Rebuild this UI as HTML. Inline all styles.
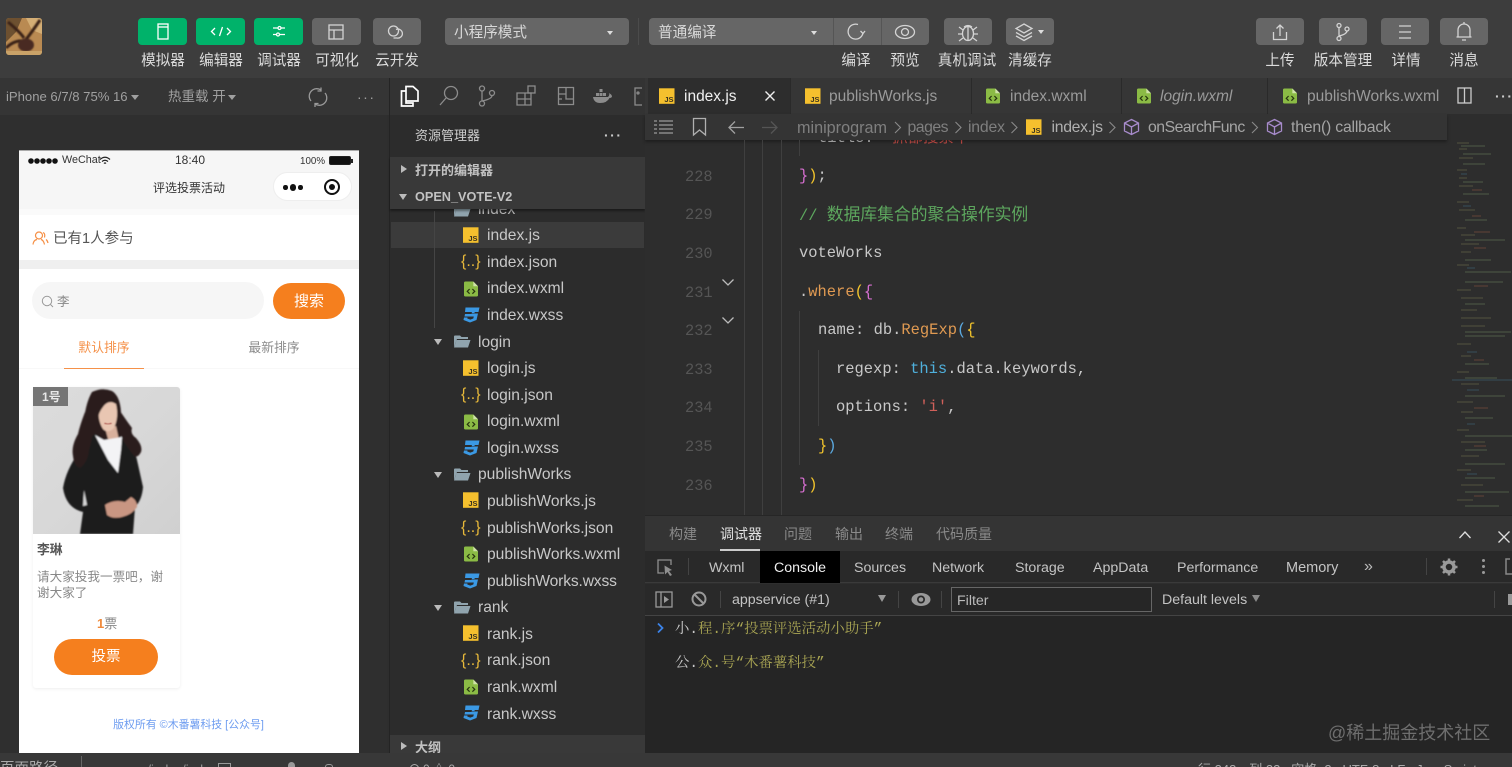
<!DOCTYPE html>
<html lang="zh"><head><meta charset="utf-8"><title>微信开发者工具</title>
<style>
*{box-sizing:border-box}
html,body{margin:0;padding:0;width:1512px;height:767px;overflow:hidden;background:#2e2e2e}
body{position:relative;font-family:"Liberation Sans","Noto Sans CJK SC",sans-serif;color:#ccc}
.a,.t,.b,svg.i{position:absolute}
.t{white-space:nowrap;line-height:1}
.c{transform:translateX(-50%)}
.b{border-radius:4px;background:#666}
.g{background:#00b26a}
.l{font-size:14.6px;top:53.5px;color:#dcdcdc}
.i{fill:none;stroke:#d4d4d4;stroke-width:1.3}
.tree{font-size:15.6px;color:#c8c8c8}
.br{font-size:15.8px;top:120px;color:#7f7f7f}
.js{font-size:16px;color:#e8b93a}
.m{font-family:"Liberation Mono","Noto Sans CJK SC",monospace;font-size:15.45px;color:#c8c8c8}
.n{font-family:"Liberation Mono",monospace;font-size:15.35px;color:#555;left:685px}
.tab{font-size:15.5px;color:#9a9a9a;top:89px}
.p{font-size:14px;color:#8a8a8a;top:527px}
.d{font-size:14.2px;color:#c4c4c4;top:561px}
.con{font-family:"Liberation Mono","Noto Serif CJK SC",serif;font-size:14.4px;color:#a9a553}
.con b{font-weight:400;color:#c9c9c9}
</style></head><body>
<svg width="0" height="0" style="position:absolute"><defs>
<symbol id="js" viewBox="0 0 16 16"><rect width="15.500" height="15.500" y=".3" fill="#f5c02e"/><text x="14.500" y="14" text-anchor="end" font-family="Liberation Sans" font-size="7.500" font-weight="700" fill="#3a3320">JS</text></symbol>
<symbol id="xm" viewBox="0 0 15 16"><path d="M1.500 0H10L15 5V14.500Q15 16 13.500 16H1.500Q0 16 0 14.500V1.500Q0 0 1.500 0Z" fill="#8bbb45"/><path d="M10 0V5H15Z" fill="#cfe3a8"/><path d="M6 8L3.500 10.500L6 13M9 8L11.500 10.500L9 13" fill="none" stroke="#26330f" stroke-width="1.300"/></symbol>
<symbol id="cs" viewBox="0 0 17 16"><path d="M2.500 0.500H16.500L15.500 5H9L8.500 6.500H15L13.500 13L7 15.500L0.500 13L1 10.500H4.500L4.300 11.500L7.300 12.600L10.300 11.500L10.800 9.500H1.500L2 7H11.300L11.700 5H2Z" fill="#3b99e4"/></symbol>
<symbol id="fo" viewBox="0 0 18 13"><path d="M1 1.500Q1 .5 2 .5H7L8.500 2H15V4H4L1 12Z" fill="#90a4ae"/><path d="M3.500 5H17.500L15 12.500H1Z" fill="#90a4ae"/></symbol>
<filter id="soft"><feGaussianBlur stdDeviation="0.7"/></filter>
<filter id="soft2"><feGaussianBlur stdDeviation="0.4"/></filter>
</defs></svg>

<!-- top toolbar -->
<div class="a" style="left:0;top:0;width:1512px;height:78px;background:#3d3d3d"></div>
<svg class="a" style="left:6px;top:18px;border-radius:3px" width="36" height="37" viewBox="0 0 36 37"><rect width="36" height="37" fill="#b98a52"/><path d="M0 0H16L10 14L0 24Z" fill="#6d5030"/><path d="M20 0H36V16L26 12Z" fill="#d4ae75"/><g filter="url(#soft)"><path d="M2 4Q14 14 18 20M34 2Q26 14 18 24M0 30Q10 20 22 24" stroke="#3b2414" stroke-width="3" fill="none"/><ellipse cx="20" cy="27" rx="8" ry="6.500" fill="#4a2c20"/></g><rect y="33" width="36" height="4" fill="#c9a268"/></svg>

<div class="b g" style="left:138px;top:18px;width:49px;height:27px"></div>
<svg class="i" style="left:156px;top:23px" width="14" height="17"><rect x="2" y="1" width="10" height="15" stroke="#fff"/><path d="M2 4H12" stroke="#fff"/></svg>
<div class="b g" style="left:196px;top:18px;width:49px;height:27px"></div>
<svg class="i" style="left:210px;top:25px" width="22" height="13"><path d="M5 3L1.500 6.500L5 10M17 3L20.500 6.500L17 10M12.500 2L9.500 11" stroke="#fff"/></svg>
<div class="b g" style="left:254px;top:18px;width:49px;height:27px"></div>
<svg class="i" style="left:272px;top:25px" width="14" height="13"><path d="M1 3H6M9 3H13M1 9.500H4M8 9.500H13" stroke="#fff"/><circle cx="7.500" cy="3" r="1.500" stroke="#fff"/><circle cx="6" cy="9.500" r="1.500" stroke="#fff"/></svg>
<div class="b" style="left:312px;top:18px;width:49px;height:27px"></div>
<svg class="i" style="left:328px;top:24px" width="16" height="16"><rect x="1" y="1" width="14" height="14"/><path d="M1 6H15M6 6V15"/></svg>
<div class="b" style="left:373px;top:18px;width:48px;height:27px"></div>
<svg class="i" style="left:387px;top:24px" width="20" height="16"><circle cx="6.500" cy="7" r="5"/><path d="M9 5.500A4.500 4.500 0 1 1 10 14H6.500"/></svg>
<div class="b" style="left:445px;top:18px;width:184px;height:27px"></div>
<div class="t" style="left:454px;top:26px;font-size:14.6px;color:#d8d8d8">小程序模式</div>
<div class="a" style="left:607px;top:31px;border:3px solid transparent;border-top:4px solid #ddd"></div>
<div class="a" style="left:638px;top:18px;width:1px;height:27px;background:#4b4b4b"></div>
<div class="b" style="left:649px;top:18px;width:280px;height:27px"></div>
<div class="a" style="left:833px;top:18px;width:1px;height:27px;background:#555"></div>
<div class="a" style="left:881px;top:18px;width:1px;height:27px;background:#555"></div>
<div class="t" style="left:658px;top:26px;font-size:14.6px;color:#d8d8d8">普通编译</div>
<div class="a" style="left:811px;top:31px;border:3px solid transparent;border-top:4px solid #ddd"></div>
<svg class="i" style="left:846px;top:22px" width="20" height="20"><path d="M12 2.500A7.500 7.500 0 1 0 17 11"/><path d="M14.500 9L17 11.500L19 9"/></svg>
<svg class="i" style="left:894px;top:24px" width="22" height="16"><ellipse cx="11" cy="8" rx="9.500" ry="6.500"/><circle cx="11" cy="8" r="3.500"/></svg>
<div class="b" style="left:944px;top:18px;width:48px;height:27px"></div>
<svg class="i" style="left:957px;top:21px" width="22" height="22"><ellipse cx="11" cy="12.500" rx="5.500" ry="7"/><path d="M7 6Q11 3 15 6M11 6V19M6 9L2 6M16 9L20 6M5 13H1M17 13H21M6 17L2 20M16 17L20 20"/></svg>
<div class="b" style="left:1006px;top:18px;width:48px;height:27px"></div>
<svg class="i" style="left:1014px;top:22px" width="20" height="20"><path d="M10 2L18 6.500L10 11L2 6.500ZM2 10.500L10 15L18 10.500M2 14L10 18.500L18 14"/></svg>
<div class="a" style="left:1038px;top:30px;border:3px solid transparent;border-top:4px solid #ddd"></div>
<div class="b" style="left:1256px;top:18px;width:48px;height:27px"></div>
<svg class="i" style="left:1271px;top:22px" width="18" height="20"><path d="M9 14V3M5.500 6.500L9 3L12.500 6.500M2.500 10V17.500H15.500V10"/></svg>
<div class="b" style="left:1319px;top:18px;width:48px;height:27px"></div>
<svg class="i" style="left:1335px;top:22px" width="16" height="20"><circle cx="4" cy="3.500" r="2"/><circle cx="4" cy="16.500" r="2"/><circle cx="12" cy="7" r="2"/><path d="M4 5.500V14.500M12 9Q12 12 4 14"/></svg>
<div class="b" style="left:1381px;top:18px;width:48px;height:27px"></div>
<svg class="i" style="left:1397px;top:24px" width="16" height="16"><path d="M2 2H14M2 8H14M2 14H14"/></svg>
<div class="b" style="left:1440px;top:18px;width:48px;height:27px"></div>
<svg class="i" style="left:1455px;top:21px" width="18" height="22"><path d="M3 16V9A6 6 0 0 1 15 9V16ZM1.500 16H16.500M7 19H11M9 1V3"/></svg>

<div class="t l c" style="left:163px">模拟器</div><div class="t l c" style="left:221px">编辑器</div><div class="t l c" style="left:279px">调试器</div><div class="t l c" style="left:337px">可视化</div><div class="t l c" style="left:397px">云开发</div>
<div class="t l c" style="left:856px">编译</div><div class="t l c" style="left:905px">预览</div><div class="t l c" style="left:967px">真机调试</div><div class="t l c" style="left:1030px">清缓存</div>
<div class="t l c" style="left:1280px">上传</div><div class="t l c" style="left:1343px">版本管理</div><div class="t l c" style="left:1406px">详情</div><div class="t l c" style="left:1464px">消息</div>

<!-- simulator -->
<div class="a" style="left:0;top:78px;width:390px;height:37px;background:#353535"></div>
<div class="a" style="left:0;top:115px;width:387px;height:638px;background:#2f2f2f"></div>
<div class="t" style="left:6px;top:90px;font-size:13.100px;color:#a0a0a0">iPhone 6/7/8 75% 16</div>
<div class="a" style="left:131px;top:95px;border:4px solid transparent;border-top:5px solid #a0a0a0"></div>
<div class="t" style="left:168px;top:90px;font-size:13.500px;color:#a0a0a0">热重载 开</div>
<div class="a" style="left:228px;top:95px;border:4px solid transparent;border-top:5px solid #a0a0a0"></div>
<svg class="i" style="left:308px;top:87px;stroke:#9a9a9a" width="20" height="20"><path d="M3 14A7.500 7.500 0 0 1 13 3M17 6A7.500 7.500 0 0 1 7 17M13 0.500V4H9.500M7 20V16.500H10.500"/></svg>
<div class="t" style="left:357px;top:90px;font-size:14px;color:#a0a0a0;letter-spacing:1.500px">···</div>

<!-- phone -->
<div class="a" style="left:19px;top:150px;width:340px;height:603px;background:#fff;overflow:hidden;border-top:1px solid #aaa"></div>
<div class="a" style="left:19px;top:151px;width:340px;height:58px;background:#f6f6f6"></div>
<svg class="a" style="left:27px;top:157px" width="33" height="8" fill="#111"><circle cx="4" cy="4" r="2.800"/><circle cx="10" cy="4" r="2.800"/><circle cx="16" cy="4" r="2.800"/><circle cx="22" cy="4" r="2.800"/><circle cx="28" cy="4" r="2.800"/></svg>
<div class="t" style="left:62px;top:155px;font-size:10.800px;color:#333">WeChat</div>
<svg class="a" style="left:99px;top:156px" width="12" height="10"><path d="M1 3.500Q6 -1 11 3.500M3 5.500Q6 3 9 5.500M5 7.500Q6 6.500 7 7.500" fill="none" stroke="#222" stroke-width="1.200"/></svg>
<div class="t" style="left:175px;top:154px;font-size:12px;color:#333">18:40</div>
<div class="t" style="left:300px;top:157px;font-size:9.800px;color:#333">100%</div>
<div class="a" style="left:329px;top:156px;width:22px;height:9px;border:1px solid #222;border-radius:2px;background:#111"></div>
<div class="a" style="left:351px;top:158.500px;width:1.500px;height:4px;background:#222"></div>
<div class="t" style="left:153px;top:182px;font-size:12px;color:#333">评选投票活动</div>
<div class="a" style="left:273px;top:172px;width:79px;height:29px;border:1px solid #eee;border-radius:15px;background:#fff"></div>
<div class="a" style="left:283px;top:185px;width:4.500px;height:4.500px;border-radius:50%;background:#111"></div>
<div class="a" style="left:289.500px;top:184px;width:6.500px;height:6.500px;border-radius:50%;background:#111"></div>
<div class="a" style="left:298px;top:185px;width:4.500px;height:4.500px;border-radius:50%;background:#111"></div>
<div class="a" style="left:324px;top:179px;width:16px;height:16px;border:2px solid #111;border-radius:50%"></div>
<div class="a" style="left:329px;top:184px;width:6px;height:6px;border-radius:50%;background:#111"></div>
<div class="a" style="left:19px;top:209px;width:340px;height:6px;background:#fafafa"></div>
<svg class="a" style="left:32px;top:231px" width="17" height="15" fill="none" stroke="#f58f45" stroke-width="1.200"><circle cx="7" cy="4.500" r="3.500"/><path d="M1 13.500Q1.500 9 5 8.500M9 8.500Q11.500 9 12.500 13.500M11 1.500Q13.500 2.500 12.500 6.500M14 8.500Q15.500 9.500 16 12"/></svg>
<div class="t" style="left:53px;top:232px;font-size:14.500px;color:#555">已有1人参与</div>
<div class="a" style="left:19px;top:260px;width:340px;height:9px;background:#efefef"></div>
<div class="a" style="left:32px;top:282px;width:232px;height:37px;border-radius:19px;background:#f6f6f6"></div>
<svg class="a" style="left:41px;top:295px" width="13" height="13" fill="none" stroke="#999" stroke-width="1"><circle cx="6" cy="6" r="4.700"/><path d="M9.500 9.500L12 12"/></svg>
<div class="t" style="left:57px;top:295.500px;font-size:12.500px;color:#888">李</div>
<div class="a" style="left:273px;top:283px;width:72px;height:36px;border-radius:18px;background:#f57f1e"></div>
<div class="t c" style="left:309px;top:294px;font-size:15px;color:#fff">搜索</div>
<div class="t c" style="left:104px;top:342px;font-size:12.800px;color:#f59149">默认排序</div>
<div class="t c" style="left:274px;top:342px;font-size:12.800px;color:#8c8c8c">最新排序</div>
<div class="a" style="left:19px;top:368px;width:340px;height:1px;background:#f8f8f8"></div>
<div class="a" style="left:64px;top:367.500px;width:80px;height:1.500px;background:#f59149"></div>

<!-- card -->
<div class="a" style="left:33px;top:387px;width:147px;height:301px;border-radius:3px;box-shadow:0 1px 3px rgba(0,0,0,.07);background:#fff"></div>
<svg class="a" style="left:33px;top:387px;border-radius:3px 3px 0 0" width="147" height="147" viewBox="33 387 147 147">
<defs><linearGradient id="bg" x1="0" y1="0" x2="1" y2="1"><stop offset="0" stop-color="#dcdcdc"/><stop offset=".5" stop-color="#d8d8d8"/><stop offset="1" stop-color="#d0d0d0"/></linearGradient></defs>
<rect x="33" y="387" width="147" height="147" fill="url(#bg)"/>
<g filter="url(#soft)">
<path d="M92 392Q102 387 112 391Q120 396 121 412L121 440L84 450L84 420Q86 402 92 392Z" fill="#2b1e1f"/>
<path d="M105 428L116 426L119 440L110 446Z" fill="#d8b09c"/>
<path d="M79 452Q86 439 96 434L108 444L122 438Q134 446 137 460L143 487Q142 500 135 507L133 534H80L83 512Q66 508 63 488Q66 470 79 452Z" fill="#1b1a1c"/>
<path d="M84 490L83 506L87 505Z" fill="#d8d8d8"/>
<path d="M95 435L104 440L122 437L121 450L118 473L108 460Z" fill="#f3f3f5"/>
<path d="M85 412Q80 425 78 434Q71 446 73 456Q74 466 80 468Q88 462 89 450Q93 438 93 425Z" fill="#2b1e1f"/>
<path d="M118 408Q126 420 132 428Q130 434 136 438Q143 446 141 452Q138 458 134 456Q128 448 124 442Q118 430 116 420Z" fill="#2b1e1f"/>
<path d="M99 404Q106 398 116 404Q119 417 114 428Q108 434 103 429Q97 420 99 404Z" fill="#e9c6b2"/>
<path d="M97 403Q106 393 118 404Q108 399 103 407Q99 412 98 418Z" fill="#2b1e1f"/>
<path d="M105 505Q114 499 125 502L131 497Q137 500 137 507Q132 514 125 516Q114 520 107 515Z" fill="#c99682"/>
</g>
<path d="M102.500 412.500H106M110 412.500H113.500" stroke="#33211f" stroke-width="1.100" filter="url(#soft2)"/>
<path d="M104.500 423Q108 425.500 111.500 423" stroke="#b5655c" stroke-width="1.400" fill="none" filter="url(#soft2)"/>
</svg>
<div class="a" style="left:33px;top:387px;width:35px;height:19px;background:#757575"></div>
<div class="t" style="left:42px;top:390.500px;font-size:12px;font-weight:700;color:#e8e8e8">1号</div>
<div class="t" style="left:37px;top:544px;font-size:12.800px;font-weight:700;color:#555">李琳</div>
<div class="t" style="left:37px;top:571px;font-size:12.600px;color:#888">请大家投我一票吧，谢</div>
<div class="t" style="left:37px;top:587px;font-size:12.600px;color:#888">谢大家了</div>
<div class="t" style="left:97px;top:616.500px;font-size:13px;color:#888"><span style="color:#f08a3c;font-weight:700">1</span>票</div>
<div class="a" style="left:54px;top:639px;width:104px;height:36px;border-radius:18px;background:#f57f1e"></div>
<div class="t c" style="left:106px;top:650px;font-size:14.500px;color:#fff">投票</div>
<div class="t c" style="left:188.500px;top:720px;font-size:10.900px;color:#6d9cf0">版权所有 ©木番薯科技 [公众号]</div>

<!-- sidebar / activity -->
<div class="a" style="left:389px;top:78px;width:1px;height:675px;background:#242424"></div>
<div class="a" style="left:390px;top:78px;width:256px;height:37px;background:#333"></div>
<div class="a" style="left:390px;top:115px;width:255px;height:620px;background:#2c2c2c"></div>
<svg class="i" style="left:400px;top:85px;stroke:#fff;stroke-width:1.700" width="20" height="22"><path d="M1.500 6H6V18H13V21H1.500ZM6 1.500H13L18 6V16H6Z"/></svg>
<svg class="i" style="left:439px;top:85px;stroke:#8c8c8c" width="20" height="22"><circle cx="12" cy="8" r="6.500"/><path d="M7 13L1 20"/></svg>
<svg class="i" style="left:478px;top:85px;stroke:#8c8c8c" width="18" height="22"><circle cx="4" cy="3.500" r="2.500"/><circle cx="4" cy="18.500" r="2.500"/><circle cx="14" cy="8" r="2.500"/><path d="M4 6V16M14 10.500Q14 14 4 16"/></svg>
<svg class="i" style="left:516px;top:85px;stroke:#8c8c8c" width="20" height="22"><path d="M1 8H9V20H1ZM1 14H15V20H9M9 8H15V14"/><rect x="12" y="1" width="7" height="7"/></svg>
<svg class="i" style="left:557px;top:86px;stroke:#8c8c8c" width="18" height="20"><path d="M1.500 1.500H16.500V18.500H1.500ZM1.500 8H9V1.500M9 8V13H16.500M1.500 13H5"/></svg>
<svg class="a" style="left:593px;top:89px" width="20" height="15" fill="#8c8c8c"><rect x="3" y="4" width="3" height="3"/><rect x="6.500" y="4" width="3" height="3"/><rect x="10" y="4" width="3" height="3"/><rect x="6.500" y="0" width="3" height="3"/><path d="M0 8H15Q17 6 16 4Q18 5 19 7Q19 9 16.500 9Q14 14 7 14Q1 14 0 8Z"/></svg>
<svg class="i" style="left:634px;top:87px;stroke:#8c8c8c" width="8" height="19"><rect x="1" y="1" width="8" height="17"/><circle cx="4" cy="6" r="1"/></svg>
<div class="t" style="left:415px;top:129px;font-size:13px;color:#cfcfcf">资源管理器</div>
<div class="t" style="left:604px;top:128px;font-size:14px;color:#ccc;letter-spacing:1.500px;font-weight:700">···</div>

<!-- tree -->
<div class="a" style="left:391px;top:222px;width:253px;height:26px;background:#3b3b3b"></div>
<div class="t tree" style="left:478px;top:202px;color:#b5b5b5">index</div>
<svg class="a" style="left:453px;top:204px" width="18" height="13"><use href="#fo"/></svg>
<div class="a" style="left:434px;top:211px;width:1px;height:117px;background:#454545"></div>
<div class="a" style="left:390px;top:157px;width:255px;height:52px;background:#393939;box-shadow:0 2px 2px rgba(0,0,0,.4)"></div>
<div class="a" style="left:401px;top:165px;border:4.500px solid transparent;border-left:6px solid #bbb"></div>
<div class="t" style="left:415px;top:164px;font-size:13px;font-weight:700;color:#c2c2c2">打开的编辑器</div>
<div class="a" style="left:399px;top:194px;border:4.500px solid transparent;border-top:6px solid #bbb"></div>
<div class="t" style="left:415px;top:190.500px;font-size:12.700px;font-weight:700;color:#c2c2c2">OPEN_VOTE-V2</div>

<svg class="a" style="left:463px;top:227px" width="16" height="16"><use href="#js"/></svg><div class="t tree" style="left:487px;top:228px">index.js</div>
<div class="t js" style="left:461px;top:254px">{..}</div><div class="t tree" style="left:487px;top:255px">index.json</div>
<svg class="a" style="left:464px;top:281px" width="14" height="16"><use href="#xm"/></svg><div class="t tree" style="left:487px;top:281px">index.wxml</div>
<svg class="a" style="left:463px;top:307px" width="17" height="16"><use href="#cs"/></svg><div class="t tree" style="left:487px;top:308px">index.wxss</div>

<div class="a" style="left:434px;top:339px;border:4.500px solid transparent;border-top:6px solid #bbb"></div>
<svg class="a" style="left:453px;top:335px" width="18" height="13"><use href="#fo"/></svg><div class="t tree" style="left:478px;top:335px">login</div>
<svg class="a" style="left:463px;top:360px" width="16" height="16"><use href="#js"/></svg><div class="t tree" style="left:487px;top:361px">login.js</div>
<div class="t js" style="left:461px;top:387px">{..}</div><div class="t tree" style="left:487px;top:388px">login.json</div>
<svg class="a" style="left:464px;top:414px" width="14" height="16"><use href="#xm"/></svg><div class="t tree" style="left:487px;top:414px">login.wxml</div>
<svg class="a" style="left:463px;top:440px" width="17" height="16"><use href="#cs"/></svg><div class="t tree" style="left:487px;top:441px">login.wxss</div>

<div class="a" style="left:434px;top:472px;border:4.500px solid transparent;border-top:6px solid #bbb"></div>
<svg class="a" style="left:453px;top:468px" width="18" height="13"><use href="#fo"/></svg><div class="t tree" style="left:478px;top:467px">publishWorks</div>
<svg class="a" style="left:463px;top:492px" width="16" height="16"><use href="#js"/></svg><div class="t tree" style="left:487px;top:494px">publishWorks.js</div>
<div class="t js" style="left:461px;top:520px">{..}</div><div class="t tree" style="left:487px;top:521px">publishWorks.json</div>
<svg class="a" style="left:464px;top:546px" width="14" height="16"><use href="#xm"/></svg><div class="t tree" style="left:487px;top:547px">publishWorks.wxml</div>
<svg class="a" style="left:463px;top:573px" width="17" height="16"><use href="#cs"/></svg><div class="t tree" style="left:487px;top:574px;letter-spacing:-.15px">publishWorks.wxss</div>

<div class="a" style="left:434px;top:605px;border:4.500px solid transparent;border-top:6px solid #bbb"></div>
<svg class="a" style="left:453px;top:601px" width="18" height="13"><use href="#fo"/></svg><div class="t tree" style="left:478px;top:600px">rank</div>
<svg class="a" style="left:463px;top:625px" width="16" height="16"><use href="#js"/></svg><div class="t tree" style="left:487px;top:627px">rank.js</div>
<div class="t js" style="left:461px;top:653px">{..}</div><div class="t tree" style="left:487px;top:653px">rank.json</div>
<svg class="a" style="left:464px;top:679px" width="14" height="16"><use href="#xm"/></svg><div class="t tree" style="left:487px;top:680px">rank.wxml</div>
<svg class="a" style="left:463px;top:705px" width="17" height="16"><use href="#cs"/></svg><div class="t tree" style="left:487px;top:707px">rank.wxss</div>

<div class="a" style="left:390px;top:735px;width:255px;height:24px;background:#393939"></div>
<div class="a" style="left:401px;top:742px;border:4.500px solid transparent;border-left:6px solid #bbb"></div>
<div class="t" style="left:415px;top:741px;font-size:13px;font-weight:700;color:#c2c2c2">大纲</div>

<!-- editor background and code under breadcrumb -->
<div class="a" style="left:645px;top:114px;width:867px;height:401px;background:#2d2d2d"></div>
<div class="t m" style="left:818px;top:131px">title: <span style="color:#d0504a">"抓都搜索中"</span></div>

<!-- tabs -->
<div class="a" style="left:645px;top:78px;width:867px;height:36px;background:#363636"></div>
<div class="a" style="left:648px;top:78px;width:142px;height:36px;background:#2d2d2d"></div>
<div class="a" style="left:790px;top:78px;width:1px;height:36px;background:#2a2a2a"></div>
<div class="a" style="left:971px;top:78px;width:1px;height:36px;background:#2a2a2a"></div>
<div class="a" style="left:1121px;top:78px;width:1px;height:36px;background:#2a2a2a"></div>
<div class="a" style="left:1267px;top:78px;width:1px;height:36px;background:#2a2a2a"></div>
<svg class="a" style="left:659px;top:88px" width="16" height="16"><use href="#js"/></svg>
<div class="t tab" style="left:684px;color:#f0f0f0">index.js</div>
<svg class="a" style="left:764px;top:90px" width="12" height="12"><path d="M1.500 1.500L10.500 10.500M10.500 1.500L1.500 10.500" stroke="#eee" stroke-width="1.400"/></svg>
<svg class="a" style="left:805px;top:88px" width="16" height="16"><use href="#js"/></svg>
<div class="t tab" style="left:829px">publishWorks.js</div>
<svg class="a" style="left:986px;top:88px" width="14" height="16"><use href="#xm"/></svg>
<div class="t tab" style="left:1010px">index.wxml</div>
<svg class="a" style="left:1137px;top:88px" width="14" height="16"><use href="#xm"/></svg>
<div class="t tab" style="left:1160px;font-style:italic">login.wxml</div>
<svg class="a" style="left:1283px;top:88px" width="14" height="16"><use href="#xm"/></svg>
<div class="t tab" style="left:1307px">publishWorks.wxml</div>
<svg class="i" style="left:1457px;top:87px;stroke:#ccc" width="16" height="17"><rect x="1" y="1" width="13" height="15"/><path d="M7.500 1V16"/></svg>
<div class="t" style="left:1495px;top:89px;font-size:14px;color:#ccc;letter-spacing:1.500px;font-weight:700">···</div>

<!-- breadcrumb -->
<div class="a" style="left:645px;top:114px;width:802px;height:26px;background:#343434;box-shadow:0 2px 3px rgba(0,0,0,.35)"></div>
<svg class="i" style="left:654px;top:119px;stroke:#9a9a9a" width="20" height="16"><path d="M0 2H3M5 2H19M0 6H3M5 6H19M0 10H3M5 10H19M0 14H3M5 14H19"/></svg>
<svg class="i" style="left:692px;top:117px;stroke:#b0b0b0" width="15" height="20"><path d="M1.500 1.500H13.500V18L7.500 13L1.500 18Z"/></svg>
<svg class="i" style="left:727px;top:120px;stroke:#a0a0a0" width="18" height="15"><path d="M17 7.500H2M8 1.500L2 7.500L8 13.500"/></svg>
<svg class="i" style="left:761px;top:120px;stroke:#555" width="18" height="15"><path d="M1 7.500H16M10 1.500L16 7.500L10 13.500"/></svg>
<div class="t br" style="left:797px;font-size:16.200px">miniprogram</div>
<div class="t br" style="left:907.500px;letter-spacing:-.5px">pages</div>
<div class="t br" style="left:968px;letter-spacing:-.2px">index</div>
<svg class="a" style="left:890px;top:118px" width="230" height="18" fill="none" stroke="#8a8a8a" stroke-width="1.100"><path d="M5 4L10.500 9.500L5 15M65.500 4L71 9.500L65.500 15M121.500 4L127 9.500L121.500 15M219.500 4L225 9.500L219.500 15"/></svg>
<svg class="a" style="left:1026px;top:119px" width="16" height="16"><use href="#js"/></svg>
<div class="t br" style="left:1051.500px;color:#b0b0b0;letter-spacing:-.3px">index.js</div>
<svg class="i" style="left:1123px;top:118px;stroke:#a78bcb" width="17" height="18"><path d="M8.500 1.500L15.500 5V13L8.500 16.500L1.500 13V5ZM1.500 5L8.500 9L15.500 5M8.500 9V16.500"/></svg>
<div class="t br" style="left:1148px;color:#a5a5a5;letter-spacing:-.5px">onSearchFunc</div>
<svg class="a" style="left:1250px;top:118px" width="12" height="18" fill="none" stroke="#8a8a8a" stroke-width="1.100"><path d="M2 4L7.500 9.500L2 15"/></svg>
<svg class="i" style="left:1266px;top:118px;stroke:#a78bcb" width="17" height="18"><path d="M8.500 1.500L15.500 5V13L8.500 16.500L1.500 13V5ZM1.500 5L8.500 9L15.500 5M8.500 9V16.500"/></svg>
<div class="t br" style="left:1291px;color:#a5a5a5;letter-spacing:-.2px">then() callback</div>

<!-- guides -->
<div class="a" style="left:744px;top:140px;width:1px;height:375px;background:#3f3f3f"></div>
<div class="a" style="left:762px;top:140px;width:1px;height:375px;background:#3f3f3f"></div>
<div class="a" style="left:781px;top:140px;width:1px;height:375px;background:#3f3f3f"></div>
<div class="a" style="left:799px;top:140px;width:1px;height:16px;background:#3f3f3f"></div>
<div class="a" style="left:799px;top:311px;width:1px;height:154px;background:#3f3f3f"></div>
<div class="a" style="left:818px;top:350px;width:1px;height:76px;background:#3f3f3f"></div>
<div class="t n" style="top:170px">228</div><div class="t n" style="top:208px">229</div><div class="t n" style="top:247px">230</div><div class="t n" style="top:286px">231</div><div class="t n" style="top:324px">232</div><div class="t n" style="top:363px">233</div><div class="t n" style="top:401px">234</div><div class="t n" style="top:440px">235</div><div class="t n" style="top:479px">236</div>
<svg class="i" style="left:721px;top:278px;stroke:#bbb" width="14" height="9"><path d="M1.500 1.500L7 7L12.500 1.500"/></svg>
<svg class="i" style="left:721px;top:316px;stroke:#bbb" width="14" height="9"><path d="M1.500 1.500L7 7L12.500 1.500"/></svg>
<div class="t m" style="left:799px;top:169px"><span style="color:#d66fd0">}</span><span style="color:#f2c42c">)</span>;</div>
<div class="t m" style="left:799px;top:209px;color:#5da75e">// <span style="font-size:16.800px">数据库集合的聚合操作实例</span></div>
<div class="t m" style="left:799px;top:246px">voteWorks</div>
<div class="t m" style="left:799px;top:285px">.<span style="color:#e09a52">where</span><span style="color:#f2c42c">(</span><span style="color:#d66fd0">{</span></div>
<div class="t m" style="left:818px;top:323px">name: db.<span style="color:#e09a52">RegExp</span><span style="color:#5ba9e0">(</span><span style="color:#f2c42c">{</span></div>
<div class="t m" style="left:836px;top:362px">regexp: <span style="color:#4fb0dc">this</span>.data.keywords,</div>
<div class="t m" style="left:836px;top:400px">options: <span style="color:#d0605a">'i'</span>,</div>
<div class="t m" style="left:818px;top:439px"><span style="color:#f2c42c">}</span><span style="color:#5ba9e0">)</span></div>
<div class="t m" style="left:799px;top:478px"><span style="color:#d66fd0">}</span><span style="color:#f2c42c">)</span></div>

<!-- minimap -->
<svg class="a" style="left:1448px;top:140px" width="64" height="375" fill="none" stroke-width=".8" opacity=".55">
<path stroke="#8a8a5a" d="M9 3h12M11 9h8M11 18h14M9 30h10M11 38h8M11 46h14M9 62h12M11 70h16M9 88h9M13 95h14M13 104h18M13 112h10M9 125h12M9 150h14M13 158h22M13 170h16M13 178h30M13 186h24M9 204h14M13 216h10M9 232h12M13 244h18M9 262h16M13 272h12M9 290h12M13 302h24M13 316h18M9 330h14M13 345h22M9 360h16"/>
<path stroke="#7f9a6b" d="M13 6h24M15 14h28M15 24h22M15 42h20M15 54h26M17 80h22M17 100h40M17 120h26M17 132h46M17 142h38M17 164h20M17 192h46M17 196h40M17 224h24M17 238h32M17 256h40M17 278h28M17 296h48M17 310h22M17 324h40M17 338h30M17 352h44M17 366h34"/>
<path stroke="#b0674a" d="M24 50h10M24 76h9M26 92h16M26 108h12M26 146h14M26 220h10M26 268h14M26 306h12M26 356h10"/>
<path stroke="#4a7f9e" d="M4 240h60M13 34h6M15 66h8M19 128h8M19 212h10M19 250h12M19 284h8M19 334h10"/>
</svg>

<!-- panel -->
<div class="a" style="left:645px;top:515px;width:867px;height:36px;background:#343434;border-top:1px solid #262626"></div>
<div class="t p" style="left:669px">构建</div>
<div class="t p" style="left:720px;color:#e2e2e2">调试器</div>
<div class="a" style="left:720px;top:549px;width:40px;height:1.500px;background:#ccc"></div>
<div class="t p" style="left:784px">问题</div><div class="t p" style="left:835px">输出</div><div class="t p" style="left:885px">终端</div><div class="t p" style="left:936px">代码质量</div>
<svg class="i" style="left:1458px;top:530px;stroke:#ddd" width="14" height="10"><path d="M1.500 8L7 2L12.500 8"/></svg>
<svg class="i" style="left:1497px;top:530px;stroke:#ddd" width="14" height="14"><path d="M1.500 1.500L12.500 12.500M12.500 1.500L1.500 12.500"/></svg>
<div class="a" style="left:645px;top:551px;width:867px;height:32px;background:#292929;border-bottom:1px solid #3a3a3a"></div>
<div class="a" style="left:760px;top:551px;width:80px;height:32px;background:#000"></div>
<svg class="i" style="left:656px;top:558px;stroke:#8f8f8f" width="20" height="19"><path d="M8 15H2V2H15V7"/><path d="M8.500 7.500L16 12L13 13L16 17L14 18L11.500 14L9 16.500Z" fill="#8f8f8f" stroke="none"/></svg>
<div class="a" style="left:688px;top:558px;width:1px;height:17px;background:#444"></div>
<div class="t d" style="left:709px">Wxml</div>
<div class="t d" style="left:774px;color:#f0f0f0">Console</div>
<div class="t d" style="left:854px">Sources</div><div class="t d" style="left:932px">Network</div><div class="t d" style="left:1015px">Storage</div><div class="t d" style="left:1093px">AppData</div><div class="t d" style="left:1177px">Performance</div><div class="t d" style="left:1286px;font-size:14.500px">Memory</div>
<div class="t" style="left:1364px;top:559px;font-size:16px;color:#bbb">»</div>
<div class="a" style="left:1426px;top:558px;width:1px;height:17px;background:#444"></div>
<svg class="a" style="left:1440px;top:558px" width="18" height="18"><circle cx="9" cy="9" r="5" fill="none" stroke="#9a9a9a" stroke-width="3.500"/><path d="M9 .5V4M9 14V17.500M.5 9H4M14 9H17.500M3 3L5.500 5.500M12.500 12.500L15 15M15 3L12.500 5.500M5.500 12.500L3 15" stroke="#9a9a9a" stroke-width="2.500"/></svg>
<div class="a" style="left:1481.500px;top:559px;width:3px;height:3px;border-radius:50%;background:#999;box-shadow:0 6px 0 #999,0 12px 0 #999"></div>
<svg class="a" style="left:1505px;top:558px" width="7" height="17"><path d="M5 1H1V16H7" fill="none" stroke="#888" stroke-width="1.500"/></svg>

<div class="a" style="left:645px;top:584px;width:867px;height:32px;background:#292929;border-bottom:1px solid #444"></div>
<svg class="i" style="left:655px;top:591px;stroke:#999" width="18" height="17"><rect x="1" y="1" width="16" height="15"/><path d="M6 1V16"/><path d="M9 5L14 8.500L9 12Z" fill="#999" stroke="none"/></svg>
<svg class="i" style="left:691px;top:591px;stroke:#999;stroke-width:2" width="16" height="16"><circle cx="8" cy="8" r="6.500"/><path d="M3.500 3.500L12.500 12.500"/></svg>
<div class="a" style="left:720px;top:591px;width:1px;height:17px;background:#444"></div>
<div class="t d" style="left:732px;top:593px">appservice (#1)</div>
<div class="a" style="left:878px;top:595px;border:4px solid transparent;border-top:7px solid #999"></div>
<div class="a" style="left:898px;top:591px;width:1px;height:17px;background:#444"></div>
<svg class="a" style="left:911px;top:592px" width="20" height="15"><ellipse cx="10" cy="7.500" rx="9.500" ry="6.500" fill="#999"/><circle cx="10" cy="7.500" r="4" fill="#292929"/><circle cx="10" cy="7.500" r="2.300" fill="#999"/></svg>
<div class="a" style="left:941px;top:591px;width:1px;height:17px;background:#444"></div>
<div class="a" style="left:951px;top:587px;width:201px;height:25px;border:1px solid #666;background:#262626"></div>
<div class="t d" style="left:957px;top:594px;color:#bbb">Filter</div>
<div class="t d" style="left:1162px;top:593px">Default levels</div>
<div class="a" style="left:1252px;top:595px;border:4px solid transparent;border-top:7px solid #8a8a8a"></div>
<div class="a" style="left:1494px;top:591px;width:1px;height:17px;background:#444"></div>
<div class="a" style="left:1508px;top:594px;width:4px;height:11px;background:#999"></div>

<div class="a" style="left:645px;top:616px;width:867px;height:137px;background:#252525"></div>
<svg class="a" style="left:656px;top:622px" width="9" height="12"><path d="M2 1.500L6.500 6L2 10.500" fill="none" stroke="#3b82e8" stroke-width="1.800"/></svg>
<div class="t con" style="left:675px;top:623px"><b>小.</b>程.序“投票评选活动小助手”</div>
<div class="t con" style="left:675px;top:657px"><b>公.</b>众.号“木番薯科技”</div>
<div class="t" style="left:1328px;top:724px;font-size:18px;color:#6e6e6e">@稀土掘金技术社区</div>

<!-- status -->
<div class="a" style="left:0;top:753px;width:1512px;height:14px;background:#383838;overflow:hidden">
<div class="t" style="left:0;top:9px;font-size:14.500px;color:#aaa">页面路径</div>
<div class="a" style="left:81px;top:3px;width:1px;height:11px;background:#666"></div>
<div class="t" style="left:112px;top:10px;font-size:13px;color:#999">pages/index/index</div>
<div class="a" style="left:218px;top:10px;width:13px;height:4px;border:1px solid #999;border-bottom:0"></div>
<div class="a" style="left:288px;top:9px;width:7px;height:5px;border-radius:4px 4px 0 0;background:#999"></div>
<div class="a" style="left:325px;top:11px;width:8px;height:3px;border-radius:4px 4px 0 0;border:1px solid #999;border-bottom:0"></div>
<div class="t" style="left:1198px;top:10px;font-size:13px;color:#aaa">行 243，列 22&nbsp;&nbsp;&nbsp;空格: 2&nbsp;&nbsp;&nbsp;UTF-8&nbsp;&nbsp;&nbsp;LF&nbsp;&nbsp;&nbsp;JavaScript</div>
<div class="a" style="left:410px;top:11px;width:9px;height:9px;border-radius:50%;border:1px solid #aaa"></div>
<div class="t" style="left:423px;top:10px;font-size:12px;color:#aaa">0 △ 0</div>
</div>
</body></html>
